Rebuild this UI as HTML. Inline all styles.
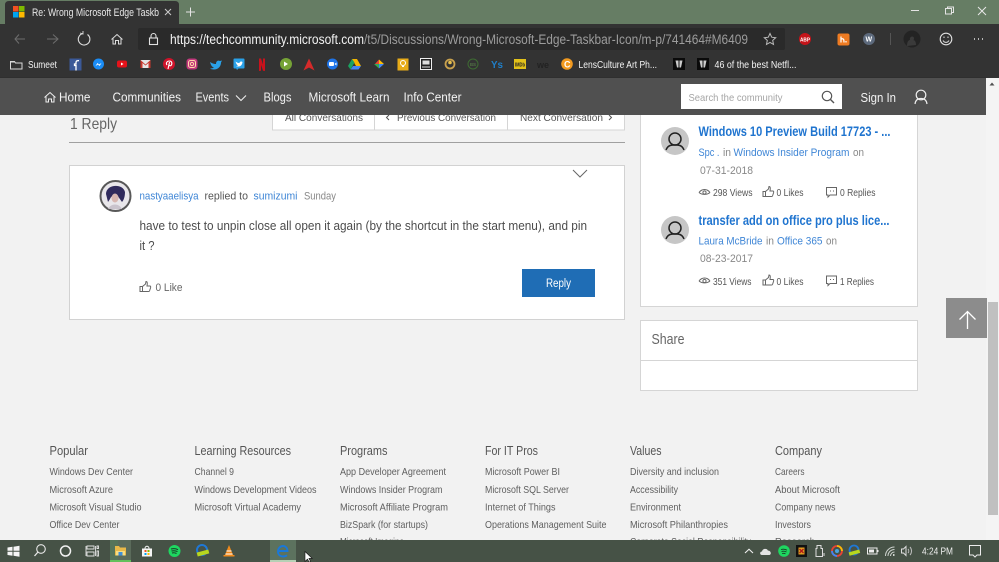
<!DOCTYPE html>
<html><head><meta charset="utf-8"><title>Re: Wrong Microsoft Edge Taskbar Icon</title>
<style>
html,body{margin:0;padding:0;width:999px;height:562px;overflow:hidden;background:#f2f2f2}
svg{display:block;position:absolute;left:0;top:0;filter:blur(0.3px)}
text{font-family:"Liberation Sans",sans-serif;white-space:pre}
.f{font-size:10.5px;fill:#5f5f5f}
.h{font-size:12.5px;fill:#555}
.n{font-size:13px;fill:#f2f2f2}
.b{font-size:10.5px;fill:#f4f4f4}
.l{font-size:11px;fill:#3f86d6}
.g{font-size:11px;fill:#888}
.s{font-size:10.5px;fill:#555}
.t{font-size:13.5px;fill:#1f74cf;font-weight:bold}
.i{fill:none;stroke:#666;stroke-width:1}
.w{fill:none;stroke:#e8e8e8;stroke-width:1.2}
.d{fill:none;stroke:#8c8c8c;stroke-width:1.2}
</style></head><body>
<svg width="999" height="562" viewBox="0 0 999 562" xmlns="http://www.w3.org/2000/svg">
<rect width="999" height="562" fill="#f2f2f2"/>

<!-- main left -->
<text x="70" y="129" font-size="16" fill="#666" textLength="47" lengthAdjust="spacingAndGlyphs">1 Reply</text>
<rect x="272.500" y="100" width="352" height="30" fill="#fff" stroke="#d5d5d5"/>
<path d="M374.500 110V130M507.500 110V130" stroke="#d5d5d5"/>
<text x="285" y="121" font-size="10.500" fill="#555" textLength="78" lengthAdjust="spacingAndGlyphs">All Conversations</text>
<path d="M389 115l-2.500 2.500 2.500 2.500M609 115l2.500 2.500-2.500 2.500" fill="none" stroke="#555"/>
<text x="397" y="121" font-size="10.500" fill="#555" textLength="99" lengthAdjust="spacingAndGlyphs">Previous Conversation</text>
<text x="520" y="121" font-size="10.500" fill="#555" textLength="83" lengthAdjust="spacingAndGlyphs">Next Conversation</text>
<rect x="69" y="142" width="556" height="1" fill="#a0a0a0"/>

<rect x="69.500" y="165.500" width="555" height="154" fill="#fff" stroke="#d2d2d2"/>
<path d="M573 170l7 7 7-7" fill="none" stroke="#666"/>
<circle cx="115.500" cy="196" r="15" fill="#e8e6ea" stroke="#585858" stroke-width="2"/>
<path d="M106 194c0-10 17-11 19-2 0 6-2 9-3 10l-5-7c-3 0-6 1-7 4l-2 3z" fill="#2f2a5c"/>
<ellipse cx="115" cy="198" rx="3.500" ry="4.500" fill="#d7b6b0"/>
<path d="M108 209c3-6 11-6 14 0z" fill="#c9c3cc"/>
<text x="139.500" y="199.500" class="l" textLength="59" lengthAdjust="spacingAndGlyphs">nastyaaelisya</text>
<text x="204.500" y="199.500" font-size="11" fill="#555" textLength="43.500" lengthAdjust="spacingAndGlyphs">replied to</text>
<text x="253.500" y="199.500" class="l" textLength="44" lengthAdjust="spacingAndGlyphs">sumizumi</text>
<text x="304" y="199.500" class="g" textLength="32" lengthAdjust="spacingAndGlyphs">Sunday</text>
<text x="139.500" y="230" font-size="13" fill="#4c4c4c" textLength="447.500" lengthAdjust="spacingAndGlyphs">have to test to unpin close all open it again (by the shortcut in the start menu), and pin</text>
<text x="139.500" y="250" font-size="13" fill="#4c4c4c" textLength="15" lengthAdjust="spacingAndGlyphs">it ?</text>
<path class="i" d="M140 291.500h2.500v-5h-2.500zM142.500 286.500l3-2.500 0.500-2.500c1.500 0 1.500 2 1 4.500h3c0.800 0 0.800 1 0.500 2l-1 3c-0.200 0.500-0.500 0.500-1 0.500h-6"/>
<text x="155.500" y="291" font-size="11" fill="#666" textLength="27" lengthAdjust="spacingAndGlyphs">0 Like</text>
<rect x="522" y="269" width="73" height="28" fill="#1f6db5"/>
<text x="546" y="287" font-size="11.500" fill="#fff" textLength="25" lengthAdjust="spacingAndGlyphs">Reply</text>

<!-- right panel -->
<rect x="640.500" y="100" width="277" height="206.500" fill="#fff" stroke="#d5d5d5"/>
<circle cx="675" cy="141" r="14" fill="#c6c6c6"/>
<circle cx="675" cy="139" r="6" fill="none" stroke="#222" stroke-width="1.500"/>
<path d="M666 150c2-5 5-5 9-5s7 0 9 5" fill="none" stroke="#222" stroke-width="1.500"/>
<text x="698.500" y="136" class="t" textLength="192" lengthAdjust="spacingAndGlyphs">Windows 10 Preview Build 17723 - ...</text>
<text x="698.500" y="156" class="l" textLength="21" lengthAdjust="spacingAndGlyphs">Spc .</text>
<text x="723" y="156" class="g" textLength="8" lengthAdjust="spacingAndGlyphs">in</text>
<text x="733.500" y="156" class="l" textLength="116" lengthAdjust="spacingAndGlyphs">Windows Insider Program</text>
<text x="853" y="156" class="g" textLength="11" lengthAdjust="spacingAndGlyphs">on</text>
<text x="700" y="174" class="g" textLength="53" lengthAdjust="spacingAndGlyphs">07-31-2018</text>
<path class="i" d="M699 192.500c3-4 8-4 11 0M699 192.500c3 2.500 8 2.500 11 0"/><circle cx="704.500" cy="192.500" r="1.600" class="i"/>
<text x="713" y="196" class="s" textLength="39.500" lengthAdjust="spacingAndGlyphs">298 Views</text>
<path class="i" d="M763 196.500h2.500v-5h-2.500zM765.500 191.500l3-2.500 0.500-2.500c1.500 0 1.500 2 1 4.500h3c0.800 0 0.800 1 0.500 2l-1 3c-0.200 0.500-0.500 0.500-1 0.500h-6"/>
<text x="776.500" y="196" class="s" textLength="27" lengthAdjust="spacingAndGlyphs">0 Likes</text>
<path class="i" d="M826.500 187.500h10v7.500h-6.500l-2 2v-2h-1.500z"/><path d="M830 191h1M833 191h1" stroke="#666"/>
<text x="840" y="196" class="s" textLength="35.500" lengthAdjust="spacingAndGlyphs">0 Replies</text>

<circle cx="675" cy="230" r="14" fill="#c6c6c6"/>
<circle cx="675" cy="228" r="6" fill="none" stroke="#222" stroke-width="1.500"/>
<path d="M666 239c2-5 5-5 9-5s7 0 9 5" fill="none" stroke="#222" stroke-width="1.500"/>
<text x="698.500" y="225" class="t" textLength="191" lengthAdjust="spacingAndGlyphs">transfer add on office pro plus lice...</text>
<text x="698.500" y="244.500" class="l" textLength="64" lengthAdjust="spacingAndGlyphs">Laura McBride</text>
<text x="766" y="244.500" class="g" textLength="8" lengthAdjust="spacingAndGlyphs">in</text>
<text x="777" y="244.500" class="l" textLength="45.500" lengthAdjust="spacingAndGlyphs">Office 365</text>
<text x="826" y="244.500" class="g" textLength="11" lengthAdjust="spacingAndGlyphs">on</text>
<text x="700" y="262" class="g" textLength="53" lengthAdjust="spacingAndGlyphs">08-23-2017</text>
<path class="i" d="M699 281c3-4 8-4 11 0M699 281c3 2.500 8 2.500 11 0"/><circle cx="704.500" cy="281" r="1.600" class="i"/>
<text x="713" y="285" class="s" textLength="38.500" lengthAdjust="spacingAndGlyphs">351 Views</text>
<path class="i" d="M763 285h2.500v-5h-2.500zM765.500 280l3-2.500 0.500-2.500c1.500 0 1.500 2 1 4.500h3c0.800 0 0.800 1 0.500 2l-1 3c-0.200 0.500-0.500 0.500-1 0.500h-6"/>
<text x="776.500" y="285" class="s" textLength="27" lengthAdjust="spacingAndGlyphs">0 Likes</text>
<path class="i" d="M826.500 276h10v7.500h-6.500l-2 2v-2h-1.500z"/><path d="M830 279.500h1M833 279.500h1" stroke="#666"/>
<text x="840" y="285" class="s" textLength="34" lengthAdjust="spacingAndGlyphs">1 Replies</text>

<rect x="640.500" y="320.500" width="277" height="70" fill="#fff" stroke="#d5d5d5"/>
<rect x="641" y="360" width="276" height="1" fill="#d5d5d5"/>
<text x="651.500" y="344" font-size="15" fill="#666" textLength="33" lengthAdjust="spacingAndGlyphs">Share</text>

<!-- scrollbar + top button -->
<rect x="986" y="78" width="13" height="462" fill="#f4f4f4"/>
<path d="M992 82.500l-2.500 3h5z" fill="#505050"/>
<rect x="988" y="302" width="10" height="213" fill="#c0c0c0"/>
<rect x="946" y="298" width="41" height="40" fill="#8c8c8c"/>
<path d="M967.500 329V312M959.500 319.500l8-8 8 8" fill="none" stroke="#fff" stroke-width="1.300"/>

<!-- footer -->
<g class="h">
<text class="h" x="49.500" y="455" textLength="38.500" lengthAdjust="spacingAndGlyphs">Popular</text>
<text class="h" x="194.500" y="455" textLength="96.500" lengthAdjust="spacingAndGlyphs">Learning Resources</text>
<text class="h" x="340" y="455" textLength="47.500" lengthAdjust="spacingAndGlyphs">Programs</text>
<text class="h" x="485" y="455" textLength="53" lengthAdjust="spacingAndGlyphs">For IT Pros</text>
<text class="h" x="630" y="455" textLength="31.500" lengthAdjust="spacingAndGlyphs">Values</text>
<text class="h" x="775" y="455" textLength="47" lengthAdjust="spacingAndGlyphs">Company</text>
</g>
<text class="f" x="49.500" y="475" textLength="83.500" lengthAdjust="spacingAndGlyphs">Windows Dev Center</text>
<text class="f" x="49.500" y="493" textLength="63.500" lengthAdjust="spacingAndGlyphs">Microsoft Azure</text>
<text class="f" x="49.500" y="510.500" textLength="92" lengthAdjust="spacingAndGlyphs">Microsoft Visual Studio</text>
<text class="f" x="49.500" y="528" textLength="70" lengthAdjust="spacingAndGlyphs">Office Dev Center</text>
<text class="f" x="194.500" y="475" textLength="39.500" lengthAdjust="spacingAndGlyphs">Channel 9</text>
<text class="f" x="194.500" y="493" textLength="122" lengthAdjust="spacingAndGlyphs">Windows Development Videos</text>
<text class="f" x="194.500" y="510.500" textLength="106.500" lengthAdjust="spacingAndGlyphs">Microsoft Virtual Academy</text>
<text class="f" x="340" y="475" textLength="106" lengthAdjust="spacingAndGlyphs">App Developer Agreement</text>
<text class="f" x="340" y="493" textLength="102.500" lengthAdjust="spacingAndGlyphs">Windows Insider Program</text>
<text class="f" x="340" y="510.500" textLength="108" lengthAdjust="spacingAndGlyphs">Microsoft Affiliate Program</text>
<text class="f" x="340" y="528" textLength="88" lengthAdjust="spacingAndGlyphs">BizSpark (for startups)</text>
<text class="f" x="340" y="545" textLength="64" lengthAdjust="spacingAndGlyphs">Microsoft Imagine</text>
<text class="f" x="485" y="475" textLength="75" lengthAdjust="spacingAndGlyphs">Microsoft Power BI</text>
<text class="f" x="485" y="493" textLength="84" lengthAdjust="spacingAndGlyphs">Microsoft SQL Server</text>
<text class="f" x="485" y="510.500" textLength="70.500" lengthAdjust="spacingAndGlyphs">Internet of Things</text>
<text class="f" x="485" y="528" textLength="121.500" lengthAdjust="spacingAndGlyphs">Operations Management Suite</text>
<text class="f" x="630" y="475" textLength="89" lengthAdjust="spacingAndGlyphs">Diversity and inclusion</text>
<text class="f" x="630" y="493" textLength="48" lengthAdjust="spacingAndGlyphs">Accessibility</text>
<text class="f" x="630" y="510.500" textLength="51" lengthAdjust="spacingAndGlyphs">Environment</text>
<text class="f" x="630" y="528" textLength="98" lengthAdjust="spacingAndGlyphs">Microsoft Philanthropies</text>
<text class="f" x="630" y="545" textLength="121" lengthAdjust="spacingAndGlyphs">Corporate Social Responsibility</text>
<text class="f" x="775" y="475" textLength="29.500" lengthAdjust="spacingAndGlyphs">Careers</text>
<text class="f" x="775" y="493" textLength="65" lengthAdjust="spacingAndGlyphs">About Microsoft</text>
<text class="f" x="775" y="510.500" textLength="60.500" lengthAdjust="spacingAndGlyphs">Company news</text>
<text class="f" x="775" y="528" textLength="36" lengthAdjust="spacingAndGlyphs">Investors</text>
<text class="f" x="775" y="545" textLength="40" lengthAdjust="spacingAndGlyphs">Research</text>

<!-- nav bar -->
<rect x="0" y="78" width="986" height="37" fill="#505050"/>
<path d="M44.500 97.500l5.500-5 5.500 5M46 96.500v5.500h2.500v-3h3v3H54v-5.500" fill="none" stroke="#eee"/>
<text class="n" x="59" y="101.500" textLength="31.500" lengthAdjust="spacingAndGlyphs">Home</text>
<text class="n" x="112.500" y="101.500" textLength="68.500" lengthAdjust="spacingAndGlyphs">Communities</text>
<text class="n" x="195.500" y="101.500" textLength="33.500" lengthAdjust="spacingAndGlyphs">Events</text>
<path d="M236 95.500l5 5 5-5" fill="none" stroke="#eee" stroke-width="1.100"/>
<text class="n" x="263.500" y="101.500" textLength="28" lengthAdjust="spacingAndGlyphs">Blogs</text>
<text class="n" x="308.500" y="101.500" textLength="81" lengthAdjust="spacingAndGlyphs">Microsoft Learn</text>
<text class="n" x="403.500" y="101.500" textLength="58" lengthAdjust="spacingAndGlyphs">Info Center</text>
<rect x="681" y="84" width="161" height="25" fill="#fff"/>
<text x="688.500" y="101" font-size="10.500" fill="#a5a5a5" textLength="94" lengthAdjust="spacingAndGlyphs">Search the community</text>
<circle cx="827" cy="96" r="4.700" fill="none" stroke="#555" stroke-width="1.200"/>
<path d="M830.500 99.500l3.500 3.500" stroke="#555" stroke-width="1.400"/>
<text class="n" x="860.500" y="102" textLength="35.500" lengthAdjust="spacingAndGlyphs">Sign In</text>
<circle cx="921" cy="95" r="4.800" fill="none" stroke="#eee" stroke-width="1.200"/>
<path d="M915 104c0.500-4 3-5.500 6-5.500s5.500 1.500 6 5.500" fill="none" stroke="#eee" stroke-width="1.200"/>

<!-- title bar -->
<rect x="0" y="0" width="999" height="24" fill="#667d64"/>
<path d="M5 24V5q0-4 4-4h166q4 0 4 4v19z" fill="#333"/>
<rect x="13" y="6" width="5.500" height="5.500" fill="#f25022"/>
<rect x="19" y="6" width="5.500" height="5.500" fill="#7fba00"/>
<rect x="13" y="12" width="5.500" height="5.500" fill="#00a4ef"/>
<rect x="19" y="12" width="5.500" height="5.500" fill="#ffb900"/>
<text x="32" y="16" font-size="11" fill="#e8e8e8" textLength="127" lengthAdjust="spacingAndGlyphs">Re: Wrong Microsoft Edge Taskb</text>
<path d="M165 9l6 6M171 9l-6 6" stroke="#ccc"/>
<path d="M190.500 7.500v9M186 12h9" stroke="#e4e4e4" stroke-width="1"/>
<path d="M911 10.500h8" stroke="#e4e4e4"/>
<path d="M945.500 8.500h6v5.500h-6zM947.500 8.500v-1.500h6v5.500h-2" fill="none" stroke="#e4e4e4"/>
<path d="M978 7l8 8M986 7l-8 8" stroke="#e8e8e8" stroke-width="1"/>

<!-- address bar -->
<rect x="0" y="24" width="999" height="54" fill="#333"/>
<path d="M15 39h10M19 34.500L15 39l4 4.500" fill="none" stroke="#6e6e6e"/>
<path d="M47 39h11M53 34.500l5 4.500-5 4.500" fill="none" stroke="#6e6e6e"/>
<path d="M83 33.500a5.800 5.800 0 1 0 4.500 1" fill="none" stroke="#ddd" stroke-width="1.100"/>
<path d="M80 33l3 1 0-3" fill="none" stroke="#ddd" stroke-width="0.900"/>
<path d="M111.500 39.500l5.500-5 5.500 5M113 38.500V44h2.500v-3.500h3V44h2.500v-5.500" fill="none" stroke="#ddd"/>
<rect x="138" y="28" width="647" height="22" rx="2" fill="#2a2a2a"/>
<rect x="149.500" y="38" width="8" height="6.500" fill="none" stroke="#e0e0e0" stroke-width="1.100"/>
<path d="M151 38v-2a2.500 2.500 0 0 1 5 0v2" fill="none" stroke="#e0e0e0" stroke-width="1.100"/>
<text x="170" y="44" font-size="13.500" fill="#f2f2f2" textLength="194" lengthAdjust="spacingAndGlyphs">https://techcommunity.microsoft.com</text>
<text x="364" y="44" font-size="13.500" fill="#9c9c9c" textLength="384" lengthAdjust="spacingAndGlyphs">/t5/Discussions/Wrong-Microsoft-Edge-Taskbar-Icon/m-p/741464#M6409</text>
<path d="M770 33.500l1.700 3.700 4 .5-3 2.700.8 4-3.500-2-3.500 2 .8-4-3-2.700 4-.5z" fill="none" stroke="#bbb"/>
<circle cx="805" cy="39" r="6" fill="#c4141a"/>
<text x="800" y="41.500" font-size="5.500" font-weight="bold" fill="#fff" textLength="10" lengthAdjust="spacingAndGlyphs">ABP</text>
<rect x="831.500" y="33.500" width="12" height="12" rx="2" fill="#ee7b22" transform="translate(6 0)"/>
<path d="M841 36.500v6M841 39c3-1 3 1 3 3.500M846 41v1.500" stroke="#fff" fill="none" stroke-width="1.200"/>
<circle cx="869" cy="39" r="6" fill="#5d6a7d"/>
<text x="865.500" y="41.500" font-size="7" font-weight="bold" fill="#fff">W</text>
<rect x="890" y="33" width="1" height="12" fill="#555"/>
<circle cx="912" cy="39" r="8.500" fill="#232323"/>
<path d="M907 46c0-5 2-6 3-6-1-3 3-5 4-2 0 1 0 2-1 2 2 0 3 2 3 5" fill="#3a3a3a"/>
<circle cx="946" cy="39" r="5.800" fill="none" stroke="#e0e0e0" stroke-width="1.100"/>
<path d="M943 40.500c1.500 2.500 4.500 2.500 6 0" fill="none" stroke="#e0e0e0"/>
<path d="M944 36.500v1.500M948 36.500v1.500" stroke="#e0e0e0"/>
<path d="M974 39h1M978 39h1M982 39h1" stroke="#e6e6e6" stroke-width="1.500"/>

<!-- bookmarks -->
<path d="M10.500 61.500h4l1 1.500h6.500v6h-11.500z" fill="none" stroke="#d8d8d8"/>
<rect x="10.500" y="61" width="4" height="1.500" fill="#d8d8d8"/>
<text class="b" x="28" y="68" textLength="29" lengthAdjust="spacingAndGlyphs">Sumeet</text>
<rect x="69.500" y="58.500" width="12" height="12" fill="#3b5998"/><path d="M76 70.500v-5h-1.500v-1.500H76v-1.500c0-1.500 1-2 3-1.800" fill="none" stroke="#fff" stroke-width="1.300"/>
<circle cx="98.500" cy="64" r="5.500" fill="#1a8cf5"/><path d="M95.500 66l2-3 1.500 1.500 2.500-1.500-2 3-1.500-1.500z" fill="#fff"/>
<rect x="117" y="60.500" width="10" height="7" rx="2" fill="#e5121a"/><path d="M121 62.500v3l2.500-1.500z" fill="#fff"/>
<rect x="140.500" y="60" width="10" height="8" fill="#e6e6e6"/><path d="M140.500 60l5 4.500 5-4.500v8h-2v-5l-3 2.500-3-2.500v5h-2z" fill="#c8382e"/>
<circle cx="169" cy="64" r="6" fill="#d0132a"/><path d="M168 69l1.500-7M167 65c-1.500-2 0-4 2.500-4s3 3 1.500 4.500c-1 .7-2 0-2-1" fill="none" stroke="#fff" stroke-width="1.100"/>
<rect x="186.500" y="58.500" width="11" height="11" rx="3" fill="#c2397d"/><rect x="188.500" y="60.500" width="7" height="7" rx="2" fill="none" stroke="#ffd9a8"/><circle cx="192" cy="64" r="1.600" fill="none" stroke="#ffd9a8"/>
<path d="M210 62c3 2 5 2 6 2 0-3 2-4 4-3l2-.5-1 2c0 4-3 7-7 7-2 0-3-.5-4-1 2 0 3-.5 4-1-2-.5-3-2-4-5.500z" fill="#2aa1e8"/>
<rect x="233.500" y="58.500" width="11" height="10" rx="1" fill="#2aa1e8"/><path d="M237 70l2-2h-3z" fill="#2aa1e8"/><path d="M235.500 61.500c2 1.500 3 1.500 4 1.500 0-1.500 2-2 3-1-.3 3-2 4.500-4 4.500-1 0-2-.2-2.500-.5 1 0 1.500-.2 2-.5-1-.4-2-2-2.500-4z" fill="#fff"/>
<path d="M259 58.500h2l2 6v-6h2v12.500l-2-.3-2-6v6l-2 .3z" fill="#c8121c"/>
<circle cx="286" cy="64" r="6" fill="#76a336"/><path d="M284 61.500v5l4-2.500z" fill="#fff"/>
<path d="M309 58.500l5.500 12-5.500-3-5.500 3z" fill="#d52a2a"/>
<circle cx="332.500" cy="64" r="5.500" fill="#1f74e8"/><rect x="329" y="62" width="5" height="4" rx="1" fill="#fff"/><path d="M334.500 64l2-1.500v3z" fill="#fff"/>
<path d="M352 59h5l4 7h-5z" fill="#f4b400"/><path d="M352 59l-4 7 2.500 3.500 4-7z" fill="#1aa260"/><path d="M350.500 69.500h8l2.500-3.500h-8z" fill="#4285f4"/>
<path d="M379 59.500v4.500h-4z" fill="#ea4335"/><path d="M384 64h-5v-4.500z" fill="#fbbc05"/><path d="M379 68.500V64h5z" fill="#4285f4"/><path d="M374 64h5v4.500z" fill="#34a853"/>
<rect x="397.500" y="58.500" width="11" height="12" fill="#e8ac18"/><circle cx="403" cy="63" r="2.500" fill="none" stroke="#fff"/><path d="M402 66.500h2" stroke="#fff"/>
<rect x="420.500" y="58.500" width="11" height="11" fill="#222" stroke="#f0f0f0"/><rect x="422.500" y="60.500" width="7" height="4" fill="#ddd"/><path d="M422 67h8" stroke="#ddd"/>
<circle cx="450" cy="64" r="4.500" fill="none" stroke="#c9a14e" stroke-width="1.800"/><circle cx="450" cy="62.500" r="1.800" fill="#e8c04c"/>
<circle cx="473" cy="64" r="5" fill="none" stroke="#3e6b33"/><text x="470" y="66" font-size="4.500" fill="#5f8c4d">BS</text>
<text x="491" y="68" font-size="10" font-weight="bold" fill="#1f7fc9" textLength="12" lengthAdjust="spacingAndGlyphs">Ys</text>
<rect x="514" y="59" width="12" height="10" fill="#e3c21a"/><text x="515" y="66.500" font-size="5.500" font-weight="bold" fill="#222" textLength="10" lengthAdjust="spacingAndGlyphs">IMDb</text>
<text x="537" y="68" font-size="9" font-weight="bold" fill="#222" textLength="12" lengthAdjust="spacingAndGlyphs">we</text>
<circle cx="567" cy="64" r="5.800" fill="#f29a1f"/><text x="564" y="67.500" font-size="9" font-weight="bold" fill="#fff">C</text>
<text class="b" x="578.500" y="68" textLength="78.500" lengthAdjust="spacingAndGlyphs">LensCulture Art Ph...</text>
<rect x="673" y="58" width="12" height="12" fill="#0a0a0a"/><path d="M675.500 60.500h7l-1.500 7h-4z" fill="#ccc"/><path d="M679 60.500v7" stroke="#111"/>
<rect x="697" y="58" width="12" height="12" fill="#0a0a0a"/><path d="M699.500 60.500h7l-1.500 7h-4z" fill="#ccc"/><path d="M703 60.500v7" stroke="#111"/>
<text class="b" x="714.500" y="68" textLength="82" lengthAdjust="spacingAndGlyphs">46 of the best Netfl...</text>
<rect x="0" y="77" width="986" height="1" fill="#2f2f2f"/>

<!-- taskbar -->
<rect x="0" y="540" width="999" height="22" fill="#465246"/>
<path d="M7.500 547.500l5-.7v4h-5zM13.500 546.700l6-.9v5h-6zM7.500 551.700h5v4l-5-.7zM13.500 551.700h6v5l-6-.9z" fill="#f5f5f5"/>
<circle cx="41" cy="549" r="4.300" fill="none" stroke="#e8e8e8" stroke-width="1.100"/><path d="M38 552l-3.500 4" stroke="#e8e8e8" stroke-width="1.300"/>
<circle cx="65.500" cy="551" r="5" fill="none" stroke="#f0f0f0" stroke-width="1.500"/>
<path d="M87 546h7v3h-7zM87 552h7v4h-7zM86 546v10M95.500 546v10M97 546h1.500v2.500H97zM97 551h1.500v5H97z" fill="none" stroke="#e0e0e0" stroke-width="0.900"/>
<rect x="110" y="540" width="21" height="22" fill="#5b6b5b"/>
<rect x="110" y="540" width="8" height="22" fill="#54775a" opacity=".7"/>
<rect x="110" y="560" width="21" height="2" fill="#63c05c"/>
<path d="M115 546h4l1 1.500h6v8h-11z" fill="#e9b949"/><rect x="116" y="551" width="9" height="4.500" fill="#f7dd83"/><rect x="118.500" y="552" width="4" height="3.500" fill="#3f8fd8"/>
<path d="M142 548.500h10v8h-10z" fill="#f5f5f5"/><path d="M145 548.500c0-3 4-3 4 0" fill="none" stroke="#f5f5f5"/>
<rect x="144.500" y="550" width="2" height="2" fill="#f25022"/><rect x="147.500" y="550" width="2" height="2" fill="#7fba00"/><rect x="144.500" y="553" width="2" height="2" fill="#00a4ef"/><rect x="147.500" y="553" width="2" height="2" fill="#ffb900"/>
<circle cx="174.500" cy="551" r="6" fill="#1ed760"/><path d="M171 549c2.500-.7 5-.5 7 .7M171.500 551c2-.5 4-.4 6 .6M172 553c1.500-.4 3-.3 4.500.5" fill="none" stroke="#1a3a26" stroke-width="1"/>
<circle cx="202" cy="550" r="5" fill="none" stroke="#1f78d6" stroke-width="2"/><rect x="197" y="551" width="12" height="4" fill="#b8d71e" transform="rotate(-15 203 553)"/>
<path d="M229 545l4.500 11h-9z" fill="#f08a1c"/><path d="M226.500 551h5M225.500 554h7" stroke="#fff"/><rect x="223.500" y="555" width="11" height="1.500" fill="#f08a1c"/>
<rect x="270" y="540" width="26" height="22" fill="#5c725e"/>
<rect x="270" y="560" width="26" height="2" fill="#b5d0b5"/>
<path d="M278.500 551h9c0-3-2-5-4.500-5-3 0-5 2.500-5 5.500s2 5 5 5c1.500 0 3-.4 4-1.200" fill="none" stroke="#1a78d8" stroke-width="1.900"/>
<path d="M305 551.500v10l2.500-2.400 1.700 3 1.300-.7-1.600-3h3.300z" fill="#fff" stroke="#111" stroke-width=".6"/>

<path d="M745 553l4-3.800 4 3.800" fill="none" stroke="#f0f0f0" stroke-width="1.100"/>
<path d="M762 555c-2.500 0-2.500-3.500 0-3.500.5-3 5-3.500 6-.8 2.500-.5 4 3.500 1.500 4.300z" fill="#e4e4e4"/>
<circle cx="784" cy="551" r="5.800" fill="#1ed760"/><path d="M781 549.500c2-.6 4-.4 6 .6M781.500 551.500c1.500-.4 3.500-.3 5 .5M782 553.500c1-.3 2.500-.2 3.500.4" fill="none" stroke="#1a3a26" stroke-width=".9"/>
<rect x="796" y="545" width="11" height="12" fill="#111"/><rect x="798.500" y="547.500" width="6" height="7" fill="#e0a020"/><path d="M799.500 549l4 4M803.500 549l-4 4" stroke="#b01818" stroke-width="1.300"/>
<path d="M817 545.500h4v3h1.500v8h-6.500v-8H817z" fill="none" stroke="#ddd"/><path d="M824 553v3" stroke="#ddd"/>
<circle cx="837" cy="551" r="5" fill="none" stroke="#e94235" stroke-width="1.800"/><path d="M837 546a5 5 0 0 1 5 5" fill="none" stroke="#fbbc05" stroke-width="1.800"/><path d="M832 551a5 5 0 0 0 5 5" fill="none" stroke="#4285f4" stroke-width="1.800"/><circle cx="837" cy="551" r="2" fill="#4aa3e0"/>
<circle cx="854" cy="550" r="4.500" fill="none" stroke="#1f78d6" stroke-width="1.800"/><rect x="849" y="551" width="11" height="3.500" fill="#b8d71e" transform="rotate(-15 854 553)"/>
<rect x="867.500" y="548" width="9.500" height="6" fill="none" stroke="#eee"/><rect x="877.500" y="550" width="1" height="2" fill="#eee"/><rect x="869" y="549.500" width="5" height="3" fill="#eee"/>
<path d="M885.500 556a9 9 0 0 1 9-9M888 556a6.500 6.500 0 0 1 6.500-6.500M890.500 556a4 4 0 0 1 4-4" fill="none" stroke="#cfd4cf"/><path d="M893 556v-2h1.500v2z" fill="#cfd4cf"/>
<path d="M901.500 549h2l2.500-2.500v9l-2.500-2.500h-2z" fill="none" stroke="#ddd"/><path d="M908 549a3 3 0 0 1 0 4M910 547a6 6 0 0 1 0 8" fill="none" stroke="#bbb"/>
<text x="922" y="554.500" font-size="10.500" fill="#f0f0f0" textLength="31" lengthAdjust="spacingAndGlyphs">4:24 PM</text>
<path d="M969.500 545.500h11v9.500h-3.500l-2 2-2-2h-3.500z" fill="none" stroke="#ededed"/>
</svg>
</body></html>
